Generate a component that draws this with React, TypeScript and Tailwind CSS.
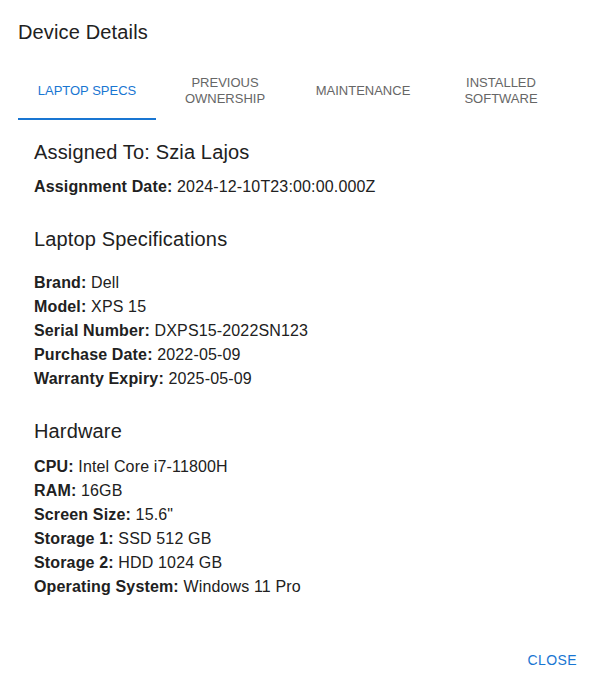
import React from 'react';

const tabs = [
  { label: 'Laptop Specs', lines: ['LAPTOP SPECS'] },
  { label: 'Previous Ownership', lines: ['PREVIOUS', 'OWNERSHIP'] },
  { label: 'Maintenance', lines: ['MAINTENANCE'] },
  { label: 'Installed Software', lines: ['INSTALLED', 'SOFTWARE'] },
];

const specs = [
  ['Brand', 'Dell'],
  ['Model', 'XPS 15'],
  ['Serial Number', 'DXPS15-2022SN123'],
  ['Purchase Date', '2022-05-09'],
  ['Warranty Expiry', '2025-05-09'],
];

const hardware = [
  ['CPU', 'Intel Core i7-11800H'],
  ['RAM', '16GB'],
  ['Screen Size', '15.6"'],
  ['Storage 1', 'SSD 512 GB'],
  ['Storage 2', 'HDD 1024 GB'],
  ['Operating System', 'Windows 11 Pro'],
];

function Row({ label, value }: { label: string; value: string }) {
  return (
    <p className="text-base leading-6 tracking-[0.15px]">
      <strong className="font-bold">{label}:</strong> {value}
    </p>
  );
}

export default function App() {
  const active = 0;

  return (
    <div
      className="flex h-[684px] w-[593px] flex-col bg-white text-[#212121]"
      style={{ fontFamily: '"Liberation Sans", Arial, sans-serif' }}
    >
      <h2 className="px-[18px] pt-4 text-xl leading-8 tracking-[0.15px]">Device Details</h2>

      <div className="mt-4 flex px-[18px]">
        {tabs.map((tab, i) => (
          <button
            key={tab.label}
            className={`flex h-14 w-[138px] flex-col items-center justify-center border-b-2 text-[13px] leading-4 ${
              i === active
                ? 'border-[#1976d2] text-[#1976d2]'
                : 'border-transparent text-[#666666]'
            }`}
          >
            {tab.lines.map((line) => (
              <span key={line}>{line}</span>
            ))}
          </button>
        ))}
      </div>

      <div className="px-[34px] pt-4">
        <h3 className="text-xl leading-8 tracking-[0.15px]">Assigned To: Szia Lajos</h3>
        <div className="mt-[7px]">
          <Row label="Assignment Date" value="2024-12-10T23:00:00.000Z" />
        </div>

        <h3 className="mt-6 text-xl leading-8 tracking-[0.15px]">Laptop Specifications</h3>
        <div className="mt-4">
          {specs.map(([l, v]) => (
            <Row key={l} label={l} value={v} />
          ))}
        </div>

        <h3 className="mt-6 text-xl leading-8 tracking-[0.15px]">Hardware</h3>
        <div className="mt-2">
          {hardware.map(([l, v]) => (
            <Row key={l} label={l} value={v} />
          ))}
        </div>
      </div>

      <div className="mt-auto flex justify-end px-2 pb-[6px]">
        <button className="rounded px-2 py-[6px] text-sm leading-6 tracking-[0.4px] text-[#1976d2]">
          CLOSE
        </button>
      </div>
    </div>
  );
}
